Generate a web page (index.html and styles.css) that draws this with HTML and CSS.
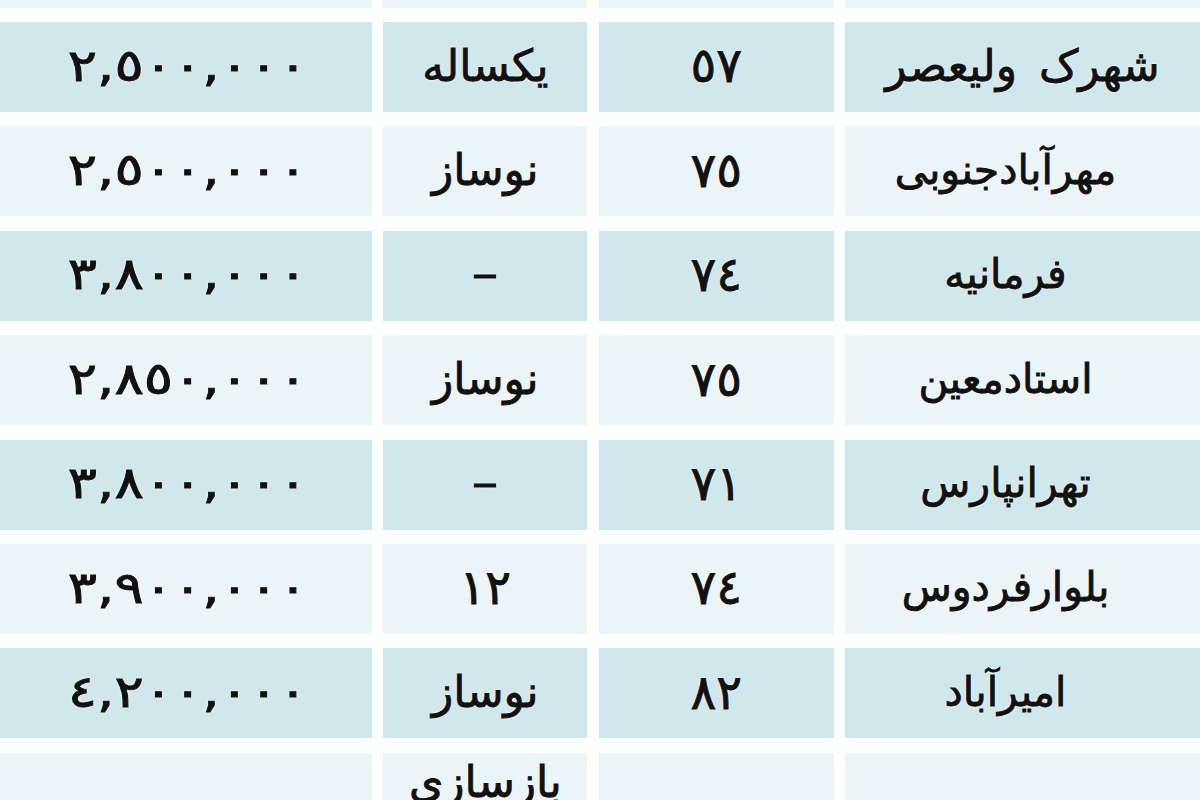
FILE: index.html
```html
<!DOCTYPE html>
<html lang="fa" dir="rtl">
<head>
<meta charset="utf-8">
<title>قیمت آپارتمان</title>
<link rel="stylesheet" href="styles.css">
</head>
<body>
<div class="table">
  <div class="cell place light"></div>
  <div class="cell num light"></div>
  <div class="cell state light"></div>
  <div class="cell price light"></div>

  <div class="cell place wide blue">شهرک ولیعصر</div>
  <div class="cell num blue">٥٧</div>
  <div class="cell state blue">یکساله</div>
  <div class="cell price blue"><span class="amount">٢,٥٠٠,٠٠٠</span></div>

  <div class="cell place light">مهرآبادجنوبی</div>
  <div class="cell num light">٧٥</div>
  <div class="cell state light">نوساز</div>
  <div class="cell price light"><span class="amount">٢,٥٠٠,٠٠٠</span></div>

  <div class="cell place blue">فرمانیه</div>
  <div class="cell num blue">٧٤</div>
  <div class="cell state blue"><span class="dash">–</span></div>
  <div class="cell price blue"><span class="amount">٣,٨٠٠,٠٠٠</span></div>

  <div class="cell place light">استادمعین</div>
  <div class="cell num light">٧٥</div>
  <div class="cell state light">نوساز</div>
  <div class="cell price light"><span class="amount">٢,٨٥٠,٠٠٠</span></div>

  <div class="cell place blue">تهرانپارس</div>
  <div class="cell num blue">٧١</div>
  <div class="cell state blue"><span class="dash">–</span></div>
  <div class="cell price blue"><span class="amount">٣,٨٠٠,٠٠٠</span></div>

  <div class="cell place light">بلوارفردوس</div>
  <div class="cell num light">٧٤</div>
  <div class="cell state num light">١٢</div>
  <div class="cell price light"><span class="amount">٣,٩٠٠,٠٠٠</span></div>

  <div class="cell place blue">امیرآباد</div>
  <div class="cell num blue">٨٢</div>
  <div class="cell state blue">نوساز</div>
  <div class="cell price blue"><span class="amount">٤,٢٠٠,٠٠٠</span></div>

  <div class="cell place light tall"></div>
  <div class="cell num light tall"></div>
  <div class="cell state light tall top">بازسازی</div>
  <div class="cell price light tall"></div>
</div>
</body>
</html>
```

FILE: styles.css
```css
html, body {
  margin: 0;
  padding: 0;
  background: #fdfefe;
  overflow: hidden;
}

body {
  width: 1200px;
  height: 800px;
  font-family: "DejaVu Sans", sans-serif;
}

.table {
  direction: rtl;
  display: grid;
  grid-template-columns: 355px 235px 204px 372px;
  grid-auto-rows: 90px;
  column-gap: 11.33px;
  row-gap: 14.4px;
  margin-top: -82.4px;
}

.cell {
  display: flex;
  align-items: center;
  justify-content: center;
  padding-bottom: 2px;
  box-sizing: border-box;
  font-size: 41px;
  font-weight: normal;
  color: #111;
  -webkit-text-stroke: 0.9px #111;
  text-shadow: 0 0 3px #fff, 0 0 2px #fff;
  line-height: 1.15;
  text-align: center;
  white-space: nowrap;
}

.blue {
  background: #d0e7eb;
}

.light {
  background: #ebf4f7;
}

.place {
  padding-right: 34px;
}

.place.wide {
  padding-right: 0;
  word-spacing: 8px;
  font-size: 44px;
}

.state {
  font-size: 44px;
}

.num {
  font-size: 48px;
}

.price {
  direction: ltr;
  font-size: 44px;
  padding-left: 4px;
}

.amount {
  display: inline-block;
  transform: scaleX(1.24);
}

.dash {
  display: inline-block;
  transform: scaleX(1.2);
}

.tall {
  height: 130px;
}

.top {
  align-items: flex-start;
  padding-top: 4px;
}
```
